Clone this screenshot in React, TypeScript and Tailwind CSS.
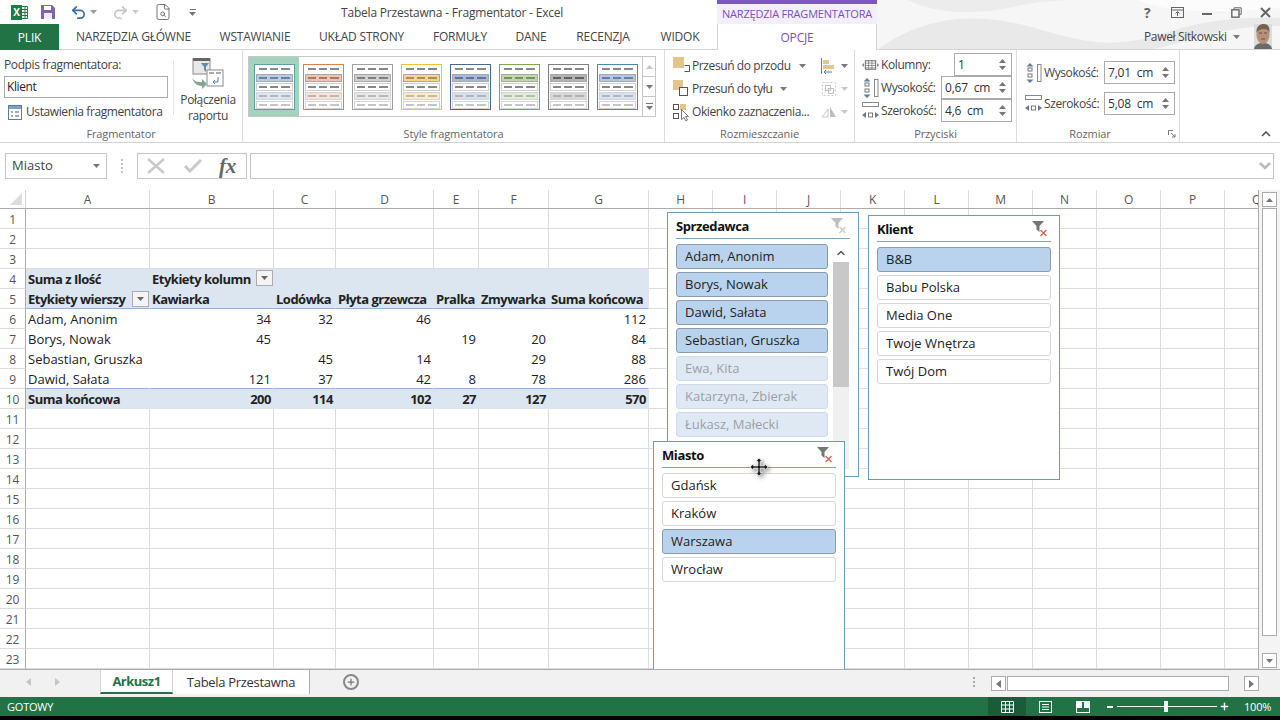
import React from 'react';
import { Undo2, Redo2, FileSearch, ChevronUp, Plus } from 'lucide-react';

const Caret = ({ className = 'text-[#777]' }: { className?: string }) => (
    <svg width="7" height="4" viewBox="0 0 7 4" className={`shrink-0 ${className}`}><path d="M0 0h7L3.5 4z" fill="currentColor" /></svg>
);

const Spin = () => (
    <div className="flex flex-col gap-[3px] items-center w-3 shrink-0 text-[#777]">
        <svg width="7" height="4" viewBox="0 0 7 4"><path d="M0 4h7L3.5 0z" fill="currentColor" /></svg>
        <svg width="7" height="4" viewBox="0 0 7 4"><path d="M0 0h7L3.5 4z" fill="currentColor" /></svg>
    </div>
);

const NumBox = ({ value, className }: { value: string; className: string }) => (
    <div className={`h-[23px] border border-[#ababab] bg-white flex items-center justify-between pl-[3px] pr-[3px] text-[12px] text-[#333] tracking-[-0.2px] ${className}`}>
        <span className="whitespace-pre">{value}</span>
        <Spin />
    </div>
);

const styles = [
    { line: '#5f9ea8', a: '#b8cce4', b: '#dde5ee', dash: '#1f3a5f' },
    { line: '#d9834a', a: '#f2c4ae', b: '#f8e2d8', dash: '#5f3020' },
    { line: '#a0a0a0', a: '#d0d0d0', b: '#e8e8e8', dash: '#333333' },
    { line: '#f2c230', a: '#fad48c', b: '#fcebc8', dash: '#5f4a10' },
    { line: '#46698f', a: '#a8b8d8', b: '#d8dfee', dash: '#1f2f50' },
    { line: '#7fa850', a: '#c2d8a8', b: '#e2edd6', dash: '#304a18' },
    { line: '#808080', a: '#b4b4b4', b: '#d8d8d8', dash: '#111111' },
    { line: '#4f86ac', a: '#b4c8e2', b: '#d8e2f0', dash: '#1f3a5f' },
];

const StyleThumb = ({ s }: { s: typeof styles[number] }) => {
    const rows = [
        { y: 1, fill: '#ffffff', dash: '#111111', edge: '#ffffff' },
        { y: 10, fill: s.a, dash: s.dash, edge: '#a8a8a8' },
        { y: 19, fill: '#ffffff', dash: '#111111', edge: '#cfcfcf' },
        { y: 28, fill: s.b, dash: '#8a8a8a', edge: '#d4d4d4' },
        { y: 37, fill: '#ffffff', dash: '#8a8a8a', edge: '#d4d4d4' },
    ];
    return (
        <svg width="41" height="46" viewBox="0 0 41 46" className="shrink-0">
            <rect x="0.5" y="0.5" width="40" height="45" fill="#fff" stroke={s.line} />
            {rows.map((r) => (
                <g key={r.y}>
                    <rect x="2.5" y={r.y + 0.5} width="36" height="7" fill={r.fill} stroke={r.edge} />
                    <path d={`M5 ${r.y + 4}h8M16 ${r.y + 4}h8M27 ${r.y + 4}h9`} stroke={r.dash} strokeWidth="1" />
                </g>
            ))}
        </svg>
    );
};

const BringFront = () => (
    <svg width="18" height="18" viewBox="0 0 18 18" className="shrink-0">
        <rect x="0" y="0" width="11" height="11" fill="#e3c58b" />
        <path d="M11.5 8.500h5v6h-5" fill="none" stroke="#555" />
    </svg>
);
const SendBack = () => (
    <svg width="18" height="18" viewBox="0 0 18 18" className="shrink-0">
        <rect x="0" y="0" width="10" height="10" fill="#e3c58b" />
        <rect x="6.500" y="7.500" width="8" height="8" fill="#fff" stroke="#555" />
    </svg>
);
const SelPane = () => (
    <svg width="18" height="18" viewBox="0 0 18 18" className="shrink-0">
        <rect x="0.500" y="1.500" width="5" height="5" fill="none" stroke="#555" />
        <rect x="0.500" y="10.500" width="5" height="5" fill="none" stroke="#555" />
        <rect x="7" y="1" width="6" height="6" fill="#e3c58b" />
        <path d="M8.500 6.500v10l2.500-2 2 3.500 1.500-1-2-3.500h3z" fill="#fff" stroke="#555" strokeWidth="0.8" />
    </svg>
);

const HeightIcon = () => (
    <svg width="17" height="20" viewBox="0 0 17 20" className="shrink-0">
        <path d="M5 0L1.500 3.500h7zM5 20l-3.500-3.500h7z" fill="#5b7fa6" />
        <rect x="3" y="5" width="4" height="3" fill="none" stroke="#777" />
        <rect x="3" y="11" width="4" height="3" fill="none" stroke="#777" />
        <rect x="12.500" y="1.500" width="3.500" height="17" fill="#fff" stroke="#888" />
    </svg>
);
const WidthIcon = () => (
    <svg width="18" height="18" viewBox="0 0 18 18" className="shrink-0">
        <rect x="0.500" y="0.500" width="16" height="4" fill="#fff" stroke="#888" />
        <path d="M0 13l4-3v6zM17 13l-4-3v6z" fill="#5b7fa6" />
        <rect x="6.500" y="11" width="4" height="4" fill="none" stroke="#777" />
    </svg>
);
const ColumnsIcon = () => (
    <svg width="17" height="10" viewBox="0 0 18 10" className="shrink-0">
        <path d="M0 5l2-2v4zM18 5l-2-2v4z" fill="#777" />
        <rect x="3.500" y="0.500" width="11" height="9" fill="#fff" stroke="#666" />
        <path d="M3.500 3h11M3.500 5.500h11M3.500 8h11M7 .5v9M10.500 .5v9" stroke="#666" strokeWidth="0.7" />
    </svg>
);

const ClearFilter = ({ off }: { off?: boolean }) => (
    <svg width="16" height="16" viewBox="0 0 16 16">
        <path d="M0 0h12L7.500 5v6L4.500 8.500V5z" fill={off ? '#bdbdbd' : '#757575'} />
        <path d="M8.500 9l6 6M14.500 9l-6 6" stroke={off ? '#c8c8c8' : '#d8604f'} strokeWidth="1.300" />
    </svg>
);

const SlicerItem = ({ text, state }: { text: string; state?: 'on' | 'off' }) => {
    const look = state === 'on'
        ? 'bg-[#b9d3ee] border-[#8b9bab] text-[#222]'
        : state === 'off'
            ? 'bg-[#dfe9f4] border-[#cfdae6] text-[#9a9fa6]'
            : 'bg-white border-[#d6d6d6] text-[#222]';
    return (
        <div className={`h-[25px] mb-[3px] border rounded-[3px] flex items-center pl-2 text-[13px] tracking-normal ${look}`}>{text}</div>
    );
};

const SlicerHead = ({ title, off }: { title: string; off?: boolean }) => (
    <div className="h-[26px] shrink-0 border-b border-[#7fa3bd] flex justify-between mb-[5px]">
        <span className="text-[13px] font-bold text-[#111] tracking-[-0.4px] mt-[4px]">{title}</span>
        <span className="mt-[5px] mr-[3px]"><ClearFilter off={off} /></span>
    </div>
);

const colW = ['w-[124px]', 'w-[124px]', 'w-[62px]', 'w-[98px]', 'w-[45px]', 'w-[70px]', 'w-[100px]', 'w-[64px]', 'w-[64px]', 'w-[64px]', 'w-[64px]', 'w-[64px]', 'w-[64px]', 'w-[64px]', 'w-[64px]', 'w-[64px]', 'w-[64px]'];
const colNames = 'ABCDEFGHIJKLMNOPQ'.split('');

type Row = { cells?: (string | number | null)[]; kind?: 'head' | 'data' | 'total' };
const rows: Record<number, Row> = {
    4: { kind: 'head', cells: ['Suma z Ilość', 'Etykiety kolumn'] },
    5: { kind: 'head', cells: ['Etykiety wierszy', 'Kawiarka', 'Lodówka', 'Płyta grzewcza', 'Pralka', 'Zmywarka', 'Suma końcowa'] },
    6: { kind: 'data', cells: ['Adam, Anonim', 34, 32, 46, null, null, 112] },
    7: { kind: 'data', cells: ['Borys, Nowak', 45, null, null, 19, 20, 84] },
    8: { kind: 'data', cells: ['Sebastian, Gruszka', null, 45, 14, null, 29, 88] },
    9: { kind: 'data', cells: ['Dawid, Sałata', 121, 37, 42, 8, 78, 286] },
    10: { kind: 'total', cells: ['Suma końcowa', 200, 114, 102, 27, 127, 570] },
};

const FilterBtn = () => (
    <span className="w-[17px] h-[16px] border border-[#ababab] bg-[#f4f4f4] flex items-center justify-center shrink-0"><Caret className="text-[#666]" /></span>
);

const Cell = ({ r, c }: { r: number; c: number }) => {
    const row = rows[r];
    const val = row?.cells?.[c];
    const pivot = row && c < 7;
    const bold = row && row.kind !== 'data';
    const numeric = typeof val === 'number';
    const right = pivot ? 'border-r-transparent' : 'border-r-[#dcdcdc]';
    const fill = pivot && row.kind !== 'data' ? 'bg-[#dce6f1]' : '';
    const bottom = pivot && (r === 5 || r === 9) ? 'border-b-[#95b3d7]' : pivot && (r === 4 || r === 10) ? 'border-b-[#dce6f1]' : pivot ? 'border-b-transparent' : 'border-b-[#dcdcdc]';
    return (
        <div className={`${colW[c]} h-5 relative shrink-0 border-r border-b ${right} ${fill} ${bottom} flex items-center pt-[2px] ${numeric ? 'justify-end pr-[2px]' : 'pl-[2px]'} text-[13px] leading-none text-[#222] whitespace-nowrap ${bold ? 'font-bold tracking-[-0.5px]' : 'tracking-normal'} ${r === 5 && c === 0 ? 'justify-between pr-0' : ''}`}>
            {val !== null && val !== undefined && <span>{val}</span>}
            {r === 4 && c === 1 && <span className="absolute left-[106px] top-[1px]"><FilterBtn /></span>}
            {r === 5 && c === 0 && <span className="-mt-[2px]"><FilterBtn /></span>}
        </div>
    );
};

const Group = ({ label, className, labelClass = '', children }: { label: string; className: string; labelClass?: string; children: React.ReactNode }) => (
    <div className={`h-full shrink-0 flex flex-col border-r border-[#dcdcdc] relative ${className}`}>
        <div className="flex-1 flex min-h-0">{children}</div>
        <div className={`h-[18px] shrink-0 text-center text-[11px] text-[#666] leading-[19px] tracking-[-0.1px] ${labelClass}`}>{label}</div>
    </div>
);

const tabs = [
    { t: 'NARZĘDZIA GŁÓWNE', w: 'w-[149px]' },
    { t: 'WSTAWIANIE', w: 'w-[94px]' },
    { t: 'UKŁAD STRONY', w: 'w-[119px]' },
    { t: 'FORMUŁY', w: 'w-[78px]' },
    { t: 'DANE', w: 'w-[64px]' },
    { t: 'RECENZJA', w: 'w-[80px]' },
    { t: 'WIDOK', w: 'w-[74px]' },
];

const App = () => {
    const rowNums = Array.from({ length: 23 }, (_, i) => i + 1);
    return (
        <div className="w-[1280px] h-[720px] overflow-hidden bg-white relative isolate flex flex-col font-['Open_Sans','Liberation_Sans',sans-serif] text-[#444] tracking-[-0.2px]">
            {/* title bar backdrop */}
            <svg width="403" height="50" viewBox="0 0 403 50" className="absolute left-[877px] top-0 -z-10">
                <rect width="403" height="50" fill="#f6f6f6" />
                <path d="M0 50C40 20 90 10 150 26c40 10 70 24 120 12 30-8 60-22 133-20v8c-60 0-90 16-130 24z" fill="#e9e9e9" />
                <path d="M30 0c30 14 70 16 110 6 30-6 50-6 70-6z" fill="#ececec" />
                <path d="M260 0c30 12 70 14 143 8V0z" fill="#fcfcfc" />
            </svg>
            {/* title bar */}
            <div className="h-6 flex shrink-0">
                <div className="w-[341px] flex items-center pl-[11px] shrink-0">
                    <div className="flex items-center w-[17px]">
                        <span className="w-[11px] h-[15px] bg-[#1f7a45] text-white text-[10px] font-bold flex items-center justify-center">X</span>
                        <svg width="6" height="13" viewBox="0 0 6 13"><path d="M0 .5h5.500v12H0M0 3.500h5.500M0 6.500h5.500M0 9.500h5.500M3 .5v12" fill="none" stroke="#1f7a45" /></svg>
                    </div>
                    <svg width="16" height="16" viewBox="0 0 16 16" className="ml-[12px]">
                        <path d="M1 1h11l3 3v11H1z" fill="#8064b4" />
                        <rect x="4" y="2" width="7" height="4" fill="#fff" />
                        <rect x="4" y="9" width="8" height="6" fill="#efeaf6" />
                    </svg>
                    <Undo2 size={17} strokeWidth={2.4} className="ml-[14px] text-[#3b6ea5]" />
                    <span className="ml-[3px]"><Caret className="text-[#999]" /></span>
                    <Redo2 size={17} strokeWidth={2.2} className="ml-[15px] text-[#c4c4c4]" />
                    <span className="ml-[3px]"><Caret className="text-[#ccc]" /></span>
                    <FileSearch size={18} strokeWidth={1.2} className="ml-[15px] text-[#666]" />
                    <div className="ml-[17px] flex flex-col gap-[2px] items-center">
                        <span className="w-[6px] h-px bg-[#777]" />
                        <Caret />
                    </div>
                </div>
                <div className="w-[376px] shrink-0 flex items-center pt-[2px] text-[12px] text-[#444]">Tabela Przestawna - Fragmentator - Excel</div>
                <div className="w-[160px] shrink-0 border-t-4 border-[#7e57c2] bg-[#f3effa] flex items-center justify-center text-[11px] text-[#7b4fb5] whitespace-nowrap">NARZĘDZIA FRAGMENTATORA</div>
                <div className="flex-1 flex items-center text-[#666] pl-[267px]">
                    <span className="text-[14px] font-bold w-[10px]">?</span>
                    <svg width="13" height="11" viewBox="0 0 13 11" className="ml-[17px]"><rect x="0.500" y="0.500" width="12" height="10" fill="none" stroke="#666" /><path d="M.5 3h12M6.500 9V5M4.500 6.500l2-2 2 2" fill="none" stroke="#666" /></svg>
                    <span className="w-[10px] h-[2px] bg-[#666] mt-1 ml-[18px]" />
                    <svg width="11" height="11" viewBox="0 0 11 11" className="ml-[19px]"><path d="M3 2.500V.8h7.200v6.500H8" fill="none" stroke="#666" /><rect x="0.800" y="2.800" width="7.200" height="7.400" fill="none" stroke="#666" strokeWidth="1.400" /></svg>
                    <svg width="11" height="11" viewBox="0 0 11 11" className="ml-[18px]"><path d="M1 1l9 9M10 1l-9 9" stroke="#666" strokeWidth="2" /></svg>
                </div>
            </div>
            {/* tabs */}
            <div className="h-[26px] flex shrink-0">
                <div className="w-[59px] bg-[#217346] text-white text-[12px] flex items-center justify-center pt-[1px]">PLIK</div>
                <div className="w-[658px] flex border-b border-[#d4d4d4] bg-white">
                    {tabs.map((t) => (
                        <div key={t.t} className={`${t.w} flex items-center justify-center pt-[1px] text-[12px] text-[#444] whitespace-nowrap`}>{t.t}</div>
                    ))}
                </div>
                <div className="w-[160px] border-x border-[#d4d4d4] bg-white flex items-center justify-center pt-[1px] text-[12px] text-[#7b4fb5]">OPCJE</div>
                <div className="flex-1 border-b border-[#d4d4d4] flex items-center text-[12px] text-[#444] tracking-[-0.35px]">
                    <span className="ml-[267px] w-[83px] whitespace-nowrap">Paweł Sitkowski</span>
                    <span className="ml-[6px]"><Caret /></span>
                    <svg width="18" height="25" viewBox="0 0 18 25" className="ml-[14px]">
                        <rect width="18" height="25" fill="#dcdcda" />
                        <path d="M0 25c1-5 5-6 9-6s8 1 9 6z" fill="#6b6b66" />
                        <ellipse cx="9" cy="11" rx="6.500" ry="9" fill="#b5917d" />
                        <path d="M2.500 9C2 2 6 0 10 0c4 0 6 3 5.500 9-1-3-2-4-6-4-3 0-6 1-7 4z" fill="#6f6352" />
                        <path d="M5 9h3M10 9h3M7 15h4" stroke="#6d5040" />
                    </svg>
                </div>
            </div>
            {/* ribbon */}
            <div className="h-[93px] shrink-0 flex border-b border-[#d4d4d4] text-[12px] text-[#444] tracking-[-0.4px] bg-white">
                <Group label="Fragmentator" className="w-[243px]">
                    <div className="w-[173px] shrink-0 pt-[8px] pl-1 flex flex-col">
                        <div className="h-[18px] shrink-0 leading-[14px]">Podpis fragmentatora:</div>
                        <div className="w-[164px] h-[22px] shrink-0 border border-[#ababab] pl-[2px] flex items-center text-[#222]">Klient</div>
                        <div className="mt-[2px] h-[24px] shrink-0 flex items-center pl-1 gap-1">
                            <svg width="14" height="15" viewBox="0 0 14 15"><rect x="0.500" y="0.500" width="13" height="14" fill="#fff" stroke="#5b7f9a" /><rect x="1" y="1" width="12" height="3" fill="#7fa3bd" /><path d="M3 7h2M7 7h4M3 11h2M7 11h4" stroke="#555" /></svg>
                            <span className="whitespace-nowrap">Ustawienia fragmentatora</span>
                        </div>
                    </div>
                    <div className="w-px h-[55px] mt-[10px] bg-[#e4e4e4] shrink-0" />
                    <div className="flex-1 flex flex-col items-center pt-[8px]">
                        <svg width="32" height="31" viewBox="0 0 32 31" className="shrink-0">
                            <rect x="1" y="0" width="17" height="16" fill="#e8e8e8" stroke="#8a8a8a" />
                            <rect x="1" y="0" width="17" height="3" fill="#666" />
                            <path d="M9 5h8l-3 4v5l-2-2V9z" fill="#5b8fb5" />
                            <rect x="15" y="12" width="16" height="16" fill="#fff" stroke="#8a8a8a" />
                            <path d="M17 15h5M24 15h5" stroke="#aaa" strokeWidth="2" />
                            <path d="M26 19v5h-5M23 22l-2 2 2 2" fill="none" stroke="#4b86b5" />
                            <path d="M0 20c3 4 6 4 10 4v-3l5 5-5 5v-3c-5 0-8-3-10-8z" fill="#7fa88e" />
                        </svg>
                        <div className="mt-[3px] text-center leading-[16px]">Połączenia<br />raportu</div>
                    </div>
                </Group>
                <Group label="Style fragmentatora" className="w-[422px]">
                    <div className="ml-[5px] mt-[6px] h-[61px] w-[408px] flex">
                        <div className="w-[395px] border border-[#c6c6c6] flex items-center gap-[8px] relative pl-[5px]">
                            <div className="absolute left-0 top-0 w-[50px] h-full bg-[#a4d3bd]" />
                            {styles.map((s, i) => (
                                <div key={i} className="relative"><StyleThumb s={s} /></div>
                            ))}
                        </div>
                        <div className="w-[13px] border-y border-r border-[#c6c6c6] flex flex-col">
                            <div className="flex-1 flex items-center justify-center border-b border-[#c6c6c6]"><svg width="7" height="4" viewBox="0 0 7 4"><path d="M0 4h7L3.5 0z" fill="#c4c4c4" /></svg></div>
                            <div className="flex-1 flex items-center justify-center border-b border-[#c6c6c6]"><Caret /></div>
                            <div className="flex-1 flex flex-col gap-[2px] items-center justify-center"><span className="w-[7px] h-px bg-[#777]" /><Caret /></div>
                        </div>
                    </div>
                </Group>
                <Group label="Rozmieszczanie" className="w-[190px]">
                    <div className="pl-[8px] pt-[4px] w-[155px] shrink-0 flex flex-col">
                        <div className="h-[23px] flex items-center whitespace-nowrap"><BringFront /><span className="ml-[1px]">Przesuń do przodu</span><span className="ml-[8px]"><Caret /></span></div>
                        <div className="h-[23px] flex items-center whitespace-nowrap"><SendBack /><span className="ml-[1px]">Przesuń do tyłu</span><span className="ml-[8px]"><Caret /></span></div>
                        <div className="h-[23px] flex items-center whitespace-nowrap"><SelPane /><span className="ml-[1px]">Okienko zaznaczenia...</span></div>
                    </div>
                    <div className="pt-[4px] flex flex-col pl-[1px]">
                        <div className="h-[23px] flex items-center gap-[4px]">
                            <svg width="16" height="16" viewBox="0 0 16 16"><path d="M.5 0v16" stroke="#777" /><rect x="2" y="2" width="6" height="4" fill="#e3c58b" /><rect x="2" y="7" width="11" height="4" fill="#e3c58b" /><path d="M11 14H3M5 12l-2 2 2 2" fill="none" stroke="#4b86b5" /></svg>
                            <Caret />
                        </div>
                        <div className="h-[23px] flex items-center gap-[4px]">
                            <svg width="16" height="16" viewBox="0 0 16 16"><rect x="1.500" y="1.500" width="13" height="13" fill="none" stroke="#c8c8c8" strokeDasharray="2 2" /><rect x="4.500" y="4.500" width="5" height="5" fill="none" stroke="#c0c0c0" /><rect x="7.500" y="7.500" width="5" height="5" fill="none" stroke="#c0c0c0" /></svg>
                            <Caret className="text-[#c8c8c8]" />
                        </div>
                        <div className="h-[23px] flex items-center gap-[4px]">
                            <svg width="16" height="16" viewBox="0 0 16 16"><path d="M1 13l6-8v8z" fill="none" stroke="#c8c8c8" /><path d="M9 3l6 10H9z" fill="#bdbdbd" /></svg>
                            <Caret className="text-[#c8c8c8]" />
                        </div>
                    </div>
                </Group>
                <Group label="Przyciski" className="w-[162px]">
                    <div className="pt-[3px] pl-[7px] pr-[4px] w-full flex flex-col items-stretch">
                        <div className="flex items-center justify-between h-[23px]">
                            <span className="flex items-center"><ColumnsIcon /><span className="ml-[2px]">Kolumny:</span></span>
                            <NumBox value="1" className="w-[58px]" />
                        </div>
                        <div className="flex items-center justify-between h-[23px]">
                            <span className="flex items-center gap-[2px]"><HeightIcon /><span>Wysokość:</span></span>
                            <NumBox value="0,67  cm" className="w-[71px]" />
                        </div>
                        <div className="flex items-center justify-between h-[23px]">
                            <span className="flex items-center gap-[1px]"><WidthIcon /><span>Szerokość:</span></span>
                            <NumBox value="4,6  cm" className="w-[71px]" />
                        </div>
                    </div>
                </Group>
                <Group label="Rozmiar" className="w-[163px]" labelClass="pr-[16px]">
                    <div className="pl-[8px] pr-[4px] pt-[11px] w-full flex flex-col gap-[8px]">
                        <div className="flex items-center justify-between h-[23px]">
                            <span className="flex items-center gap-[2px]"><HeightIcon /><span>Wysokość:</span></span>
                            <NumBox value="7,01  cm" className="w-[71px]" />
                        </div>
                        <div className="flex items-center justify-between h-[23px]">
                            <span className="flex items-center gap-[1px]"><WidthIcon /><span>Szerokość:</span></span>
                            <NumBox value="5,08  cm" className="w-[71px]" />
                        </div>
                    </div>
                    <svg width="8" height="8" viewBox="0 0 8 8" className="absolute right-[3px] bottom-[4px]"><path d="M.5 5V.5H5M3 3l4 4M7 4v3H4" fill="none" stroke="#777" /></svg>
                </Group>
                <div className="flex-1 flex items-end justify-end pr-[9px] pb-[5px]">
                    <svg width="10" height="6" viewBox="0 0 10 6"><path d="M1 5l4-4 4 4" fill="none" stroke="#555" strokeWidth="1.600" /></svg>
                </div>
            </div>
            {/* formula bar */}
            <div className="h-[47px] shrink-0 flex items-start pt-[10px] pl-[5px] text-[#444] bg-white">
                <div className="w-[102px] h-[26px] border border-[#c6c6c6] flex items-center justify-between pl-[6px] pr-[6px] text-[13px] tracking-normal">Miasto<Caret /></div>
                <div className="w-[30px] h-[26px] flex flex-col gap-[2px] items-center justify-center">
                    <span className="w-[2px] h-[2px] bg-[#c0c0c0]" /><span className="w-[2px] h-[2px] bg-[#c0c0c0]" /><span className="w-[2px] h-[2px] bg-[#c0c0c0]" /><span className="w-[2px] h-[2px] bg-[#c0c0c0]" />
                </div>
                <div className="w-[110px] h-[26px] border border-[#c6c6c6] flex items-center relative">
                    <svg width="18" height="16" viewBox="0 0 18 16" className="absolute left-[9px]"><path d="M1 1l16 14M17 1L1 15" stroke="#c8c8c8" strokeWidth="2.400" /></svg>
                    <svg width="18" height="14" viewBox="0 0 18 14" className="absolute left-[46px]"><path d="M1 7l5 5L17 1" fill="none" stroke="#c8c8c8" strokeWidth="3" /></svg>
                    <span className="absolute left-[81px] font-['Liberation_Serif',serif] italic text-[21px] font-bold text-[#666] leading-none">fx</span>
                </div>
                <div className="ml-[3px] w-[1024px] h-[26px] border border-[#c6c6c6] flex items-center justify-end pr-[2px]">
                    <svg width="12" height="8" viewBox="0 0 12 8"><path d="M1 1l5 5 5-5" fill="none" stroke="#bbb" strokeWidth="2.600" /></svg>
                </div>
            </div>
            {/* sheet */}
            <div className="h-[479px] shrink-0 flex relative overflow-hidden bg-white">
                <div className="w-[1259px] shrink-0 overflow-hidden border-r border-[#ababab]">
                    <div className="h-[19px] flex border-b border-[#ababab] w-[1400px]">
                        <div className="w-[26px] shrink-0 flex items-end justify-end border-r border-[#d4d4d4] pb-[3px] pr-[3px]">
                            <svg width="12" height="12" viewBox="0 0 12 12"><path d="M12 0v12H0z" fill="#dcdcdc" /></svg>
                        </div>
                        {colNames.map((n, i) => (
                            <div key={n} className={`${colW[i]} shrink-0 flex items-center justify-center pt-[2px] border-r border-[#dcdcdc] text-[12px] text-[#555]`}>{n}</div>
                        ))}
                    </div>
                    {rowNums.map((r) => (
                        <div key={r} className="flex h-5 w-[1400px]">
                            <div className="w-[26px] shrink-0 border-r border-b border-r-[#ababab] border-b-[#dcdcdc] flex items-center justify-center pt-[2px] text-[12px] text-[#555]">{r}</div>
                            {colW.map((_, c) => <Cell key={c} r={r} c={c} />)}
                        </div>
                    ))}
                </div>
                {/* scrollbar */}
                <div className="flex-1 bg-[#f4f4f4] flex flex-col items-start pl-[3px] pt-[2px]">
                    <div className="w-[15px] h-[15px] shrink-0 bg-white border border-[#ababab] flex items-center justify-center"><svg width="7" height="4" viewBox="0 0 7 4"><path d="M0 4h7L3.5 0z" fill="#777" /></svg></div>
                    <div className="w-[15px] h-[428px] shrink-0 bg-white border border-[#ababab] mt-[1px]" />
                    <div className="flex-1" />
                    <div className="w-[15px] h-[15px] shrink-0 bg-white border border-[#ababab] flex items-center justify-center mb-[1px]"><Caret /></div>
                </div>
                {/* slicers */}
                <div className="absolute left-[667px] top-[22px] w-[192px] h-[265px] bg-white border border-[#6f9ab8] px-2 flex flex-col overflow-hidden">
                    <SlicerHead title="Sprzedawca" off />
                    <div className="flex gap-[5px]">
                        <div className="w-[152px] shrink-0">
                            <SlicerItem text="Adam, Anonim" state="on" />
                            <SlicerItem text="Borys, Nowak" state="on" />
                            <SlicerItem text="Dawid, Sałata" state="on" />
                            <SlicerItem text="Sebastian, Gruszka" state="on" />
                            <SlicerItem text="Ewa, Kita" state="off" />
                            <SlicerItem text="Katarzyna, Zbierak" state="off" />
                            <SlicerItem text="Łukasz, Małecki" state="off" />
                        </div>
                        <div className="w-[16px] h-[225px] bg-[#f0f0f0] flex flex-col">
                            <div className="h-[18px] bg-white flex items-center justify-center"><ChevronUp size={12} strokeWidth={3} className="text-[#555]" /></div>
                            <div className="h-[125px] bg-[#c8c8c8]" />
                        </div>
                    </div>
                </div>
                <div className="absolute left-[868px] top-[25px] w-[192px] h-[265px] bg-white border border-[#6f9ab8] px-2 flex flex-col">
                    <SlicerHead title="Klient" />
                    <SlicerItem text="B&B" state="on" />
                    <SlicerItem text="Babu Polska" />
                    <SlicerItem text="Media One" />
                    <SlicerItem text="Twoje Wnętrza" />
                    <SlicerItem text="Twój Dom" />
                </div>
                <div className="absolute left-[653px] top-[251px] w-[192px] h-[240px] bg-white border border-[#6f9ab8] px-2 flex flex-col">
                    <SlicerHead title="Miasto" />
                    <SlicerItem text="Gdańsk" />
                    <SlicerItem text="Kraków" />
                    <SlicerItem text="Warszawa" state="on" />
                    <SlicerItem text="Wrocław" />
                </div>
                {/* move cursor */}
                <svg width="18" height="18" viewBox="0 0 18 18" className="absolute left-[750px] top-[268px] drop-shadow-[2px_2px_2px_rgba(0,0,0,0.5)]">
                    <path d="M9 0l3 3.500h-2v4.500h4.500V6l3.500 3-3.500 3v-2H10v4.500h2L9 18l-3-3.500h2V10H3.500v2L0 9l3.500-3v2H8V3.500H6z" fill="#111" stroke="#fff" strokeWidth="0.600" />
                </svg>
            </div>
            {/* sheet tabs */}
            <div className="h-[28px] shrink-0 bg-[#f1f1f1] border-t border-[#ababab] flex text-[#444]">
                <div className="w-[100px] shrink-0 flex items-center gap-[24px] pl-[26px] pb-[3px]">
                    <svg width="5" height="8" viewBox="0 0 5 8"><path d="M5 0v8L0 4z" fill="#c4c4c4" /></svg>
                    <svg width="5" height="8" viewBox="0 0 5 8"><path d="M0 0v8l5-4z" fill="#c4c4c4" /></svg>
                </div>
                <div className="w-[73px] h-[24px] bg-white border-b-2 border-[#217346] border-x border-x-[#d4d4d4] flex items-center justify-center pt-[2px] text-[13px] font-bold text-[#217346] tracking-[-0.5px]">Arkusz1</div>
                <div className="w-[137px] h-[24px] bg-white border-r border-[#ababab] flex items-center justify-center pt-[2px] text-[13px] text-[#333] whitespace-nowrap tracking-[-0.3px]">Tabela Przestawna</div>
                <div className="ml-[33px] h-[24px] flex items-center">
                    <span className="w-[16px] h-[16px] rounded-full border-2 border-[#888] flex items-center justify-center"><Plus size={10} strokeWidth={3} className="text-[#777]" /></span>
                </div>
                <div className="ml-[614px] h-[24px] flex flex-col gap-[2px] justify-center">
                    <span className="w-[2px] h-[2px] bg-[#aaa]" /><span className="w-[2px] h-[2px] bg-[#aaa]" /><span className="w-[2px] h-[2px] bg-[#aaa]" />
                </div>
                <div className="ml-[16px] mt-[6px] h-[15px] flex">
                    <div className="w-[15px] bg-white border border-[#ababab] flex items-center justify-center"><svg width="5" height="8" viewBox="0 0 5 8"><path d="M5 0v8L0 4z" fill="#777" /></svg></div>
                    <div className="w-[222px] bg-white border border-[#ababab] ml-px" />
                    <div className="w-[15px] ml-[15px] bg-white border border-[#ababab] flex items-center justify-center"><svg width="5" height="8" viewBox="0 0 5 8"><path d="M0 0v8l5-4z" fill="#777" /></svg></div>
                </div>
            </div>
            {/* status bar */}
            <div className="h-[19px] shrink-0 bg-[#217346] flex items-center text-white text-[11px]">
                <span className="ml-[7px] w-[981px] pt-[2px]">GOTOWY</span>
                <div className="w-[38px] h-full bg-[#1a5c38] flex items-center justify-center">
                    <svg width="13" height="12" viewBox="0 0 13 12"><path d="M.5 .5h12v11H.5zM4.500 .5v11M8.500 .5v11M.5 4h12M.5 8h12" fill="none" stroke="#fff" /></svg>
                </div>
                <div className="w-[38px] flex items-center justify-center">
                    <svg width="13" height="12" viewBox="0 0 13 12"><rect x="0.500" y="0.500" width="12" height="11" fill="none" stroke="#fff" /><path d="M3 3.500h7M3 6h7M3 8.500h7" stroke="#fff" /></svg>
                </div>
                <div className="w-[38px] flex items-center justify-center">
                    <svg width="14" height="12" viewBox="0 0 14 12"><rect x="0.500" y="0.500" width="13" height="11" fill="none" stroke="#fff" /><path d="M1 1h5v6H1zM8 1h5v6H8z" fill="#fff" /></svg>
                </div>
                <span className="ml-[5px] w-[6px] h-[2px] bg-white shrink-0" />
                <div className="ml-[4px] w-[100px] h-px bg-white relative shrink-0">
                    <span className="absolute left-[47px] -top-[5px] w-1 h-[11px] bg-white" />
                </div>
                <Plus size={11} strokeWidth={3} className="ml-[2px] text-white shrink-0" />
                <span className="ml-[14px] pt-[1px]">100%</span>
            </div>
            <div className="flex-1 bg-black" />
        </div>
    );
};

export default App;
